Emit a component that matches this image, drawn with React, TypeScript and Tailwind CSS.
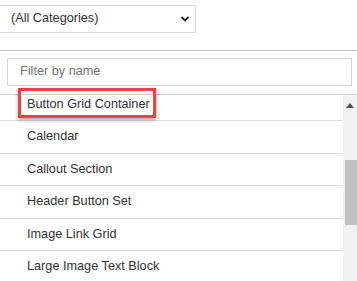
import React from 'react';

const items = [
  'Button Grid Container',
  'Calendar',
  'Callout Section',
  'Header Button Set',
  'Image Link Grid',
  'Large Image Text Block',
];

const App: React.FC = () => {
  return (
    <div
      className="relative w-[357px] h-[281px] overflow-hidden bg-white text-[#333] text-[12.7px]"
      style={{ fontFamily: '"Liberation Sans", Arial, sans-serif' }}
    >
      {/* category select */}
      <div className="pt-[5px] h-[50px]">
        <div className="-ml-px w-[197px] h-[28px] border border-[#dcdcdc] bg-white flex items-center justify-between pl-[11px] pr-[5px]">
          <span>(All Categories)</span>
          <svg width="10" height="8" viewBox="0 0 10 8">
            <path d="M1.5 2 L5 5.5 L8.5 2" fill="none" stroke="#222" strokeWidth="1.8" />
          </svg>
        </div>
      </div>

      <div className="h-px bg-[#c4c4c4]" />

      {/* filter */}
      <div className="pt-[7px] pl-[7px] pr-[5px] h-[43px]">
        <div className="h-[28px] border border-[#d6d6d6] flex items-center pl-[12px] text-[#757575]">
          Filter by name
        </div>
      </div>

      <div className="h-px bg-[#cfcfcf]" />

      {/* list */}
      <div className="flex h-[186px]">
        <div className="flex-1 overflow-hidden">
          <ul className="-mt-[6.5px]">
            {items.map((name) => (
              <li
                key={name}
                className="h-[32.5px] border-b border-[#dedede] flex items-center pl-[27px]"
              >
                {name}
              </li>
            ))}
          </ul>
        </div>
        <div className="w-[14px] bg-[#f1f1f1] flex flex-col">
          <div className="h-[14px] flex items-center justify-center mt-[3px]">
            <svg width="8" height="5" viewBox="0 0 8 5">
              <path d="M0 5 L4 0 L8 5 Z" fill="#505050" />
            </svg>
          </div>
          <div className="mt-[48px] ml-[2px] h-[65px] bg-[#c1c1c1]" />
        </div>
      </div>

      {/* highlight annotation */}
      <div className="absolute left-[18px] top-[88px] w-[138px] h-[30px] border-[3px] border-[#e04848] shadow-[0_2px_4px_rgba(0,0,0,0.35)]" />
    </div>
  );
};

export default App;
